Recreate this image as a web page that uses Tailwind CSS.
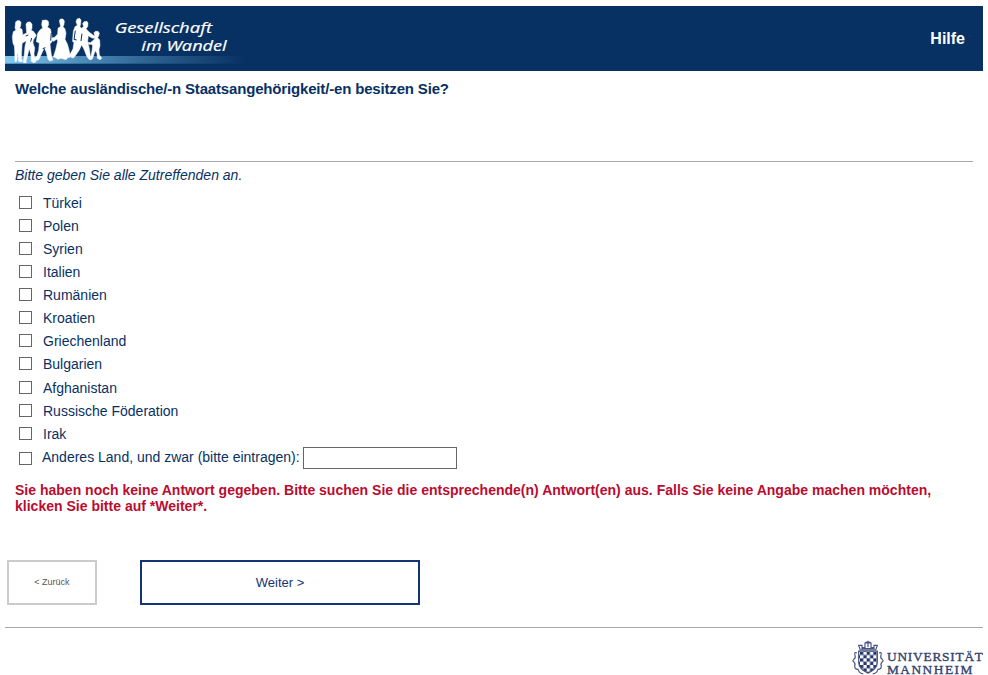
<!DOCTYPE html>
<html lang="de">
<head>
<meta charset="utf-8">
<title>Gesellschaft im Wandel</title>
<script src="https://cdn.jsdelivr.net/npm/@tailwindcss/browser@4"></script>
</head>
<body class="bg-white text-[#083163] font-['Liberation_Sans',Arial,sans-serif] text-[14px] leading-4 h-[675px] overflow-hidden">
<div class="flex flex-col h-[675px] pl-[5px] pr-[5px] pt-[6px]">
  <header class="flex justify-between bg-[#083163] h-[65px] shrink-0">
    <svg class="w-[250px] h-[65px]" viewBox="15 18 750 195">
      <defs>
        <linearGradient id="bar" x1="0" x2="1" y1="0" y2="0">
          <stop offset="0" stop-color="#7fc8ee"/><stop offset=".35" stop-color="#4a87b4"/><stop offset=".65" stop-color="#285c8c"/><stop offset="1" stop-color="#083163"/>
        </linearGradient>
      </defs>
      <rect x="15" y="168" width="720" height="23" fill="url(#bar)"/>
      <g fill="#fff" stroke="#fff" stroke-width="1.5" stroke-linejoin="round">
        <path d="M47 66l4-4h8l4 5-1 11-3 6 7 4 2 14-1 10 3 8-4 14-1 20-1 22 4 7-5 3-7-2-3-26-3 26-5 1-1-33-1-14-4-8-2-20 3-15 8-5-3-6z"/>
        <path d="M78 72l5-6h8l5 7v12l-3 6 7 3 9 12-9 14-1 9 5 15-2 17 3 20 3 5-8 2-6-4-1-19-5-19-5 19-5 19 1 4-9 0 3-27 2-22 4-17-10 6-6-12 6-12 11-5z"/>
        <path d="M126 67l1-6 12-1 6 4 1 10-4 7 9 6 4 16 1 22-6 7 2 18 3 21 4 9-10 3-5-6-5-20-6-14-10 22-7 14-9 3-7-2 2-5 9-6 5-18 2-22-9-4 4-25 7-10 8-6-3-10z"/>
        <path d="M178 63l3-6h8l4 6-1 10-3 7 6 7 3 13-3 18 7 14 5 17 4 22-8 2-5 6-7-2-8-2-10 3-4-4-9-3 7-22 6-25-2-7-10 7-9-5 1-4 11-3 9-10 1-17 8-6z"/>
        <path d="M228 65l3-8 8-2 4 5-1 11-2 9 4 5 7-5-3-9 4-6 9-1 3 6-1 10-5 6 9 10 17 13 0 6-8-1-11-7-2 17 5 22 3 22 4 7-9 2-6-9-8-20-7-14-7 16-13 19-5 5-7-2 1-5-5 4-7-2 1-4 7-2 9-16 3-20-4-2 0-7 2-24 5-14 7-4z"/>
        <path d="M282 98l4-4h8l4 5-2 9-3 5 6 7 1 17-3 11 1 16 7 11-5 4-8-4-1-14-5-9-4 11-5 14-7 3-3-4 6-8 3-16 2-15-4-4-7 0-4-6 8 1 11-9 3-5z"/>
      </g>
      <g fill="none" stroke="#083163" stroke-width="3"><path d="M95 114l-3 11M77 108l8-3M226 92l-4 26 8 2M246 101l-3 22M154 98l-2 24M128 146l8-3"/></g>
      <g fill="#fff" stroke="#fff" stroke-width=".6" font-family="'Open Sans','Noto Sans',sans-serif" font-style="italic" font-size="46">
        <text x="344" y="100" textLength="292" lengthAdjust="spacingAndGlyphs">Gesellschaft</text>
        <text x="424" y="152" textLength="256" lengthAdjust="spacingAndGlyphs">im Wandel</text>
      </g>
    </svg>
    <a class="text-white font-bold text-[16px] leading-[18px] mt-[24px] mr-[18px]">Hilfe</a>
  </header>
  <main class="px-[10px] flex flex-col">
    <h1 class="h-[90px] pt-[10px] text-[15px] font-bold leading-4 tracking-[-0.17px]">Welche ausländische/-n Staatsangehörigkeit/-en besitzen Sie?</h1>
    <p class="border-t border-[#a9a9a9] h-[30px] pt-[5px] italic text-[14px] leading-4">Bitte geben Sie alle Zutreffenden an.</p>
    <div class="grid auto-rows-[23.1px] pl-1 pt-[4.75px] leading-[14.2px]">
      <label class="flex gap-[11px]"><i class="size-[13px] border border-[#666]"></i><span>Türkei</span></label>
      <label class="flex gap-[11px]"><i class="size-[13px] border border-[#666]"></i><span>Polen</span></label>
      <label class="flex gap-[11px]"><i class="size-[13px] border border-[#666]"></i><span>Syrien</span></label>
      <label class="flex gap-[11px]"><i class="size-[13px] border border-[#666]"></i><span>Italien</span></label>
      <label class="flex gap-[11px]"><i class="size-[13px] border border-[#666]"></i><span>Rumänien</span></label>
      <label class="flex gap-[11px]"><i class="size-[13px] border border-[#666]"></i><span>Kroatien</span></label>
      <label class="flex gap-[11px]"><i class="size-[13px] border border-[#666]"></i><span>Griechenland</span></label>
      <label class="flex gap-[11px]"><i class="size-[13px] border border-[#666]"></i><span>Bulgarien</span></label>
      <label class="flex gap-[11px]"><i class="size-[13px] border border-[#666]"></i><span>Afghanistan</span></label>
      <label class="flex gap-[11px]"><i class="size-[13px] border border-[#666]"></i><span>Russische Föderation</span></label>
      <label class="flex gap-[11px]"><i class="size-[13px] border border-[#666]"></i><span>Irak</span></label>
    </div>
    <div class="flex h-[32px] -mt-[2.85px] pl-1">
      <i class="size-[13px] border border-[#666] mt-[5px]"></i>
      <span class="ml-[10px] mt-[2px] w-[261px] whitespace-nowrap">Anderes Land, und zwar (bitte eintragen):</span>
      <input type="text" aria-label="Anderes Land" class="w-[154px] h-[22px] border border-[#666] px-1">
    </div>
    <p class="text-[#ba0c2f] font-bold mt-[3px] h-[78px] tracking-[0.01px]">Sie haben noch keine Antwort gegeben. Bitte suchen Sie die entsprechende(n) Antwort(en) aus. Falls Sie keine Angabe machen möchten,<br>klicken Sie bitte auf *Weiter*.</p>
  </main>
  <div class="flex gap-[43px] pl-[2px] h-[67px]">
    <button class="w-[90px] h-[45px] border-2 border-[#ccc] text-[9px] text-[#555] pb-px">&lt; Zurück</button>
    <button class="w-[280px] h-[45px] border-2 border-[#143574] text-[13px] text-[#143574] pt-px">Weiter &gt;</button>
  </div>
  <footer class="border-t border-[#a9a9a9] flex justify-end">
    <svg class="w-[132px] h-[47px]" viewBox="33 24 396 141">
      <defs><pattern id="chk" x="60" y="95" width="20" height="20" patternUnits="userSpaceOnUse"><path d="M0 0h10v10H0zM10 10h10v10H10z" fill="#253568"/></pattern></defs>
      <g fill="none" stroke="#46547f" stroke-width="3.5">
        <path d="M56 93h56v34q0 20-28 33-28-13-28-33z" fill="url(#chk)"/>
        <path d="M61 90l-5-14h10v7h9V69h18v14h9v-7h10l-5 14zM76 68q8-5 16 0M84 62v20M64 86h40"/>
        <path d="M51 99q-9-5-6 7 3 8-4 12-5 4 1 8 5 5 2 12 0 10 10 10 4 12 16 14M117 99q9-5 6 7-3 8 4 12 5 4-1 8-5 5-2 12 0 10-10 10-4 12-16 14"/>
      </g>
      <g fill="#34426f" stroke="#34426f" stroke-width="1.1" font-family="'Liberation Serif',serif" font-size="40">
        <text x="141" y="123" textLength="288">UNIVERSITÄT</text>
        <text x="141" y="161" textLength="256">MANNHEIM</text>
      </g>
    </svg>
  </footer>
</div>
</body>
</html>
